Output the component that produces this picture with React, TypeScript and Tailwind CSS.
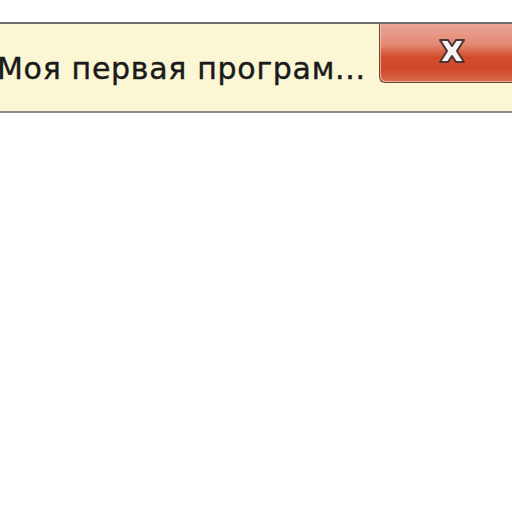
import React from "react";

export default function App() {
  return (
    <div className="w-[512px] h-[512px] bg-white overflow-hidden">
      <div className="mt-[22px] h-[91px] flex bg-[#fbf7d4] border-t-2 border-t-[#6e6e6a] border-b-2 border-b-[#8c8c86] overflow-hidden">
        <div className="flex-1 flex items-center overflow-hidden">
          <span
            className="-ml-[3px] mt-[2px] whitespace-nowrap text-[30px] text-[#1a1a1a] leading-none tracking-[0.7px] [-webkit-text-stroke:0.4px_#1a1a1a]"
            style={{ fontFamily: '"DejaVu Sans", sans-serif' }}
          >
            Моя первая програм...
          </span>
        </div>
        <div className="w-[133px] h-[59px] shrink-0 self-start rounded-bl-[6px] border border-r-0 border-t-0 border-[#6a4438] bg-[linear-gradient(to_bottom,#eba596_0%,#e48a75_35%,#da6448_48%,#d24c2a_58%,#cf4a2a_78%,#d86a4e_100%)] shadow-[inset_1px_-1px_0_rgba(255,220,200,0.6)] flex items-center justify-center">
          <svg width="30" height="28" viewBox="0 0 30 28" className="-mt-[5px] ml-[12px]">
            <path
              d="M3 3 H11 L15 9 L19 3 H27 L20 14 L27 25 H19 L15 19 L11 25 H3 L10 14 Z"
              fill="#f6f2f2"
              stroke="#4a3434"
              strokeWidth="2"
              strokeLinejoin="round"
            />
          </svg>
        </div>
      </div>
    </div>
  );
}
